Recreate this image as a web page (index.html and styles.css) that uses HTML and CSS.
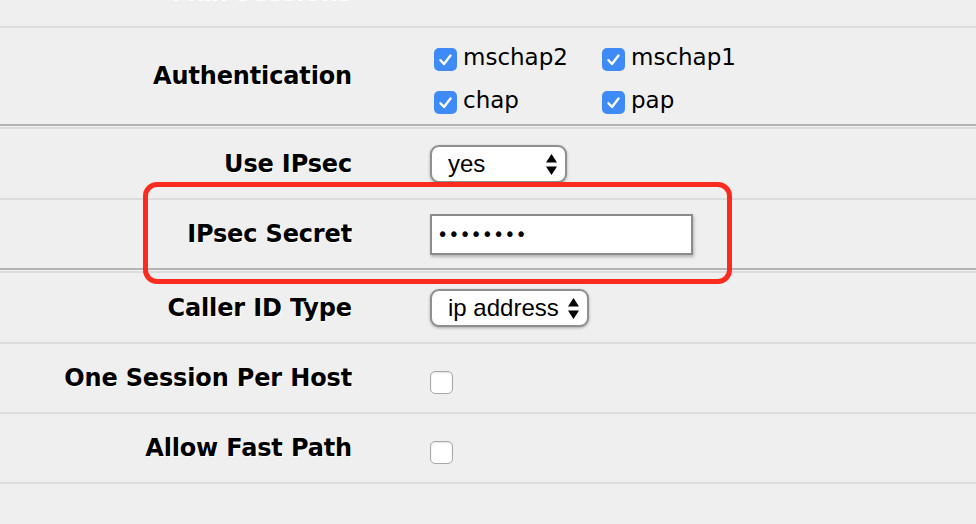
FILE: index.html
```html
<!DOCTYPE html>
<html>
<head>
<meta charset="utf-8">
<link rel="stylesheet" href="styles.css">
</head>
<body>
<div class="page">
  <div class="form">
    <div class="row top">
      <div class="label ghost">Max Sessions</div>
      <div class="ctrl"></div>
    </div>
    <div class="row auth group-end">
      <div class="label">Authentication</div>
      <div class="ctrl">
        <div class="checks">
          <label class="check"><span class="box on"><svg viewBox="0 0 23 23" width="23" height="23"><path d="M6.5 12.2 L10 16 L16.5 7.5" fill="none" stroke="#fff" stroke-width="2.4" stroke-linecap="round" stroke-linejoin="round"/></svg></span><span class="ctext">mschap2</span></label>
          <label class="check"><span class="box on"><svg viewBox="0 0 23 23" width="23" height="23"><path d="M6.5 12.2 L10 16 L16.5 7.5" fill="none" stroke="#fff" stroke-width="2.4" stroke-linecap="round" stroke-linejoin="round"/></svg></span><span class="ctext">mschap1</span></label>
          <label class="check"><span class="box on"><svg viewBox="0 0 23 23" width="23" height="23"><path d="M6.5 12.2 L10 16 L16.5 7.5" fill="none" stroke="#fff" stroke-width="2.4" stroke-linecap="round" stroke-linejoin="round"/></svg></span><span class="ctext">chap</span></label>
          <label class="check"><span class="box on"><svg viewBox="0 0 23 23" width="23" height="23"><path d="M6.5 12.2 L10 16 L16.5 7.5" fill="none" stroke="#fff" stroke-width="2.4" stroke-linecap="round" stroke-linejoin="round"/></svg></span><span class="ctext">pap</span></label>
        </div>
      </div>
    </div>
    <div class="row group-start">
      <div class="label">Use IPsec</div>
      <div class="ctrl">
        <div class="select sel-yes"><span class="stext">yes</span><svg class="arrows" viewBox="0 0 11 21" width="11" height="21"><path d="M5.5 0 L11 8.5 L0 8.5 Z M0 12.5 L11 12.5 L5.5 21 Z" fill="#000"/></svg></div>
      </div>
    </div>
    <div class="row group-end">
      <div class="label">IPsec Secret</div>
      <div class="ctrl">
        <input class="pass" type="password" value="abcdefgh">
      </div>
    </div>
    <div class="row group-start">
      <div class="label">Caller ID Type</div>
      <div class="ctrl">
        <div class="select sel-ip"><span class="stext">ip address</span><svg class="arrows" viewBox="0 0 11 21" width="11" height="21"><path d="M5.5 0 L11 8.5 L0 8.5 Z M0 12.5 L11 12.5 L5.5 21 Z" fill="#000"/></svg></div>
      </div>
    </div>
    <div class="row">
      <div class="label">One Session Per Host</div>
      <div class="ctrl"><span class="box off"></span></div>
    </div>
    <div class="row">
      <div class="label">Allow Fast Path</div>
      <div class="ctrl"><span class="box off"></span></div>
    </div>
  </div>
  <div class="highlight"></div>
</div>
</body>
</html>
```
FILE: styles.css
```css
* { box-sizing: border-box; }
html, body {
  margin: 0;
  padding: 0;
  background: #efefef;
}
body {
  font-family: "DejaVu Sans", Verdana, sans-serif;
  color: #000;
}
.page {
  position: relative;
  width: 976px;
  height: 524px;
  overflow: hidden;
}
.row {
  display: grid;
  grid-template-columns: 352px 1fr;
  column-gap: 78px;
  align-items: center;
  height: 70px;
  border-bottom: 2px solid #dcdcdc;
}
.row.top {
  height: 28px;
  align-items: start;
}
.row.auth {
  height: 98px;
}
.row.group-end {
  border-bottom-color: #b4b4b4;
}
.row.group-start {
  margin-top: 1px;
  border-top: 2px solid #dcdcdc;
  height: 73px;
}
.label {
  text-align: right;
  font-weight: bold;
  font-size: 24px;
  letter-spacing: -0.15px;
  white-space: nowrap;
  text-shadow: 1px 1px 0 #fff;
}
.label.ghost {
  color: #fff;
  text-shadow: none;
  margin-top: -21px;
}
.ctrl {
  display: flex;
  align-items: center;
}
.checks {
  display: grid;
  grid-template-columns: 168px 168px;
  row-gap: 20px;
  margin-left: 4px;
  margin-top: 10px;
}
.check {
  display: flex;
  align-items: center;
  gap: 6px;
  height: 23px;
}
.ctext {
  font-size: 23px;
  line-height: 23px;
  position: relative;
  top: -2px;
}
.box {
  display: block;
  width: 23px;
  height: 23px;
  border-radius: 5px;
  flex: none;
}
.box svg { display: block; }
.box.on {
  background: #3e8bf7;
}
.box.off {
  background: #fff;
  border: 1.5px solid #a8a8a8;
  box-shadow: inset 0 1px 2px rgba(0,0,0,0.12);
  margin-top: 8px;
}
.select {
  display: flex;
  align-items: center;
  justify-content: space-between;
  height: 38px;
  background: #fff;
  border: 2px solid #8f8f8f;
  border-radius: 9px;
  box-shadow: 0 1px 3px rgba(0,0,0,0.3);
  padding: 0 8px 0 16px;
  font-family: "Liberation Sans", Arial, sans-serif;
  font-size: 24px;
}
.sel-yes { width: 137px; margin-top: 1px; }
.sel-ip { width: 159px; margin-top: 1px; }
.stext { line-height: 1; }
.arrows { display: block; flex: none; }
.pass {
  display: block;
  width: 263px;
  height: 41px;
  border: 2px solid #8c8c8c;
  border-radius: 0;
  background: #fff;
  box-shadow: 1px 2px 3px rgba(0,0,0,0.25);
  padding: 0 0 0 5px;
  font-family: "DejaVu Sans", sans-serif;
  font-size: 19px;
  letter-spacing: 0;
  color: #000;
  outline: none;
}
.highlight {
  position: absolute;
  left: 143px;
  top: 182px;
  width: 589px;
  height: 102px;
  border: 5px solid #fc2b20;
  border-radius: 14px;
  pointer-events: none;
}
```
